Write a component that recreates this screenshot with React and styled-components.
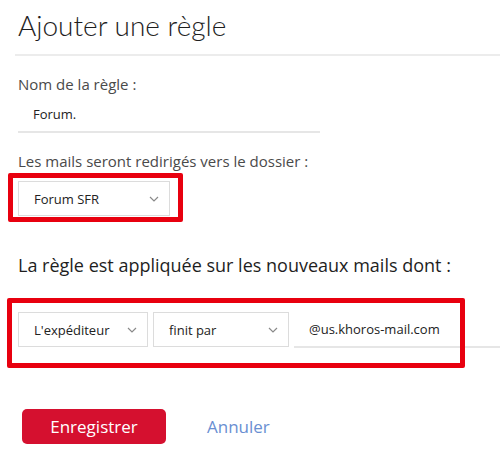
import React from "react";
import styled, { createGlobalStyle } from "styled-components";

const GlobalStyle = createGlobalStyle`
  body {
    margin: 0;
    background: #fff;
    font-family: "Open Sans", "Noto Sans", sans-serif;
    color: #333;
  }
`;

const Chevron = () => (
  <svg width="10" height="6" viewBox="0 0 10 6" fill="none">
    <path d="M1 1l4 4 4-4" stroke="#8a8a8a" strokeWidth="1.2" />
  </svg>
);

export default function App() {
  return (
    <>
      <GlobalStyle />
      <Page>
        <Title>Ajouter une règle</Title>

        <Field>
          <Label>Nom de la règle :</Label>
          <TextInput width="302px">Forum.</TextInput>
        </Field>

        <Field>
          <Label>Les mails seront redirigés vers le dossier :</Label>
          <Marked>
            <Select width="152px">
              Forum SFR
              <Chevron />
            </Select>
            <Highlight style={{ left: -10, top: -8, width: 175, height: 49 }} />
          </Marked>
        </Field>

        <Subtitle>La règle est appliquée sur les nouveaux mails dont :</Subtitle>

        <ConditionRow>
          <Select width="130px">
            L'expéditeur
            <Chevron />
          </Select>
          <Select width="136px">
            finit par
            <Chevron />
          </Select>
          <TextInput $grow>@us.khoros-mail.com</TextInput>
          <Highlight style={{ left: -11, top: -14, width: 458, height: 70 }} />
        </ConditionRow>

        <Actions>
          <SaveButton>Enregistrer</SaveButton>
          <CancelLink>Annuler</CancelLink>
        </Actions>
      </Page>
    </>
  );
}

const Page = styled.div`
  padding: 6px 0 0 18px;
`;

const Title = styled.h1`
  margin: 0 0 0 -3px;
  padding: 0 0 10px 3px;
  font-family: Lato, sans-serif;
  font-size: 28px;
  font-weight: 300;
  color: #1e1e1e;
  line-height: 38px;
  border-bottom: 2px solid #ececec;
`;

const Field = styled.div`
  display: flex;
  flex-direction: column;
  align-items: flex-start;
  margin-top: 19px;
`;

const Label = styled.div`
  font-size: 15px;
  color: #4a4a4a;
  line-height: 18px;
  margin-bottom: 4px;
`;

const TextInput = styled.div`
  box-sizing: border-box;
  width: ${(p) => p.width || "auto"};
  flex: ${(p) => (p.$grow ? 1 : "none")};
  height: 36px;
  display: flex;
  align-items: center;
  padding-left: 15px;
  font-size: 13px;
  color: #222;
  border-bottom: 2px solid #e6e6e6;
`;

const Marked = styled.div`
  position: relative;
  margin-top: 7px;
`;

const Select = styled.div`
  box-sizing: border-box;
  width: ${(p) => p.width};
  height: 35px;
  display: flex;
  align-items: center;
  justify-content: space-between;
  padding: 0 10px 0 15px;
  border: 1px solid #dcdcdc;
  font-size: 13px;
  color: #222;
  background: #fff;
`;

const Highlight = styled.div`
  position: absolute;
  box-sizing: border-box;
  border: 5px solid #e8000f;
  border-radius: 2px;
  pointer-events: none;
`;

const Subtitle = styled.div`
  margin-top: 37px;
  font-size: 18px;
  color: #1e1e1e;
  line-height: 24px;
`;

const ConditionRow = styled.div`
  position: relative;
  display: flex;
  gap: 5px;
  margin-top: 35px;
`;

const Actions = styled.div`
  display: flex;
  align-items: center;
  gap: 41px;
  margin-top: 61px;
  padding-left: 4px;
`;

const SaveButton = styled.button`
  width: 144px;
  height: 35px;
  border: none;
  border-radius: 5px;
  background: #d5102f;
  color: #fff;
  font-family: inherit;
  font-size: 17px;
`;

const CancelLink = styled.a`
  font-size: 17px;
  color: #6a8fd2;
  cursor: pointer;
`;
